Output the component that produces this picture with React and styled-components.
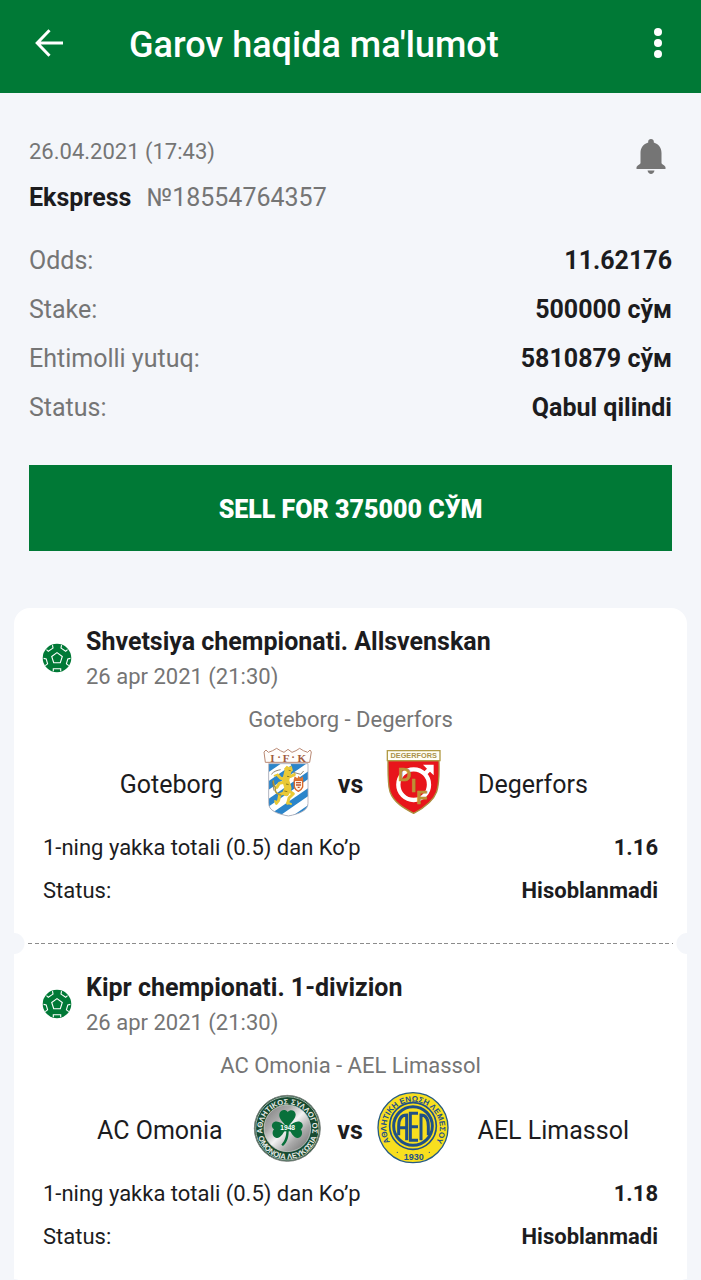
import React from "react";
import styled, { createGlobalStyle, ThemeProvider } from "styled-components";

const theme = {
    colors: {
        primary: "#007936",
        page: "#f4f6fa",
        surface: "#ffffff",
        text: "#1c1c1e",
        muted: "#757575",
    },
};

const GlobalStyle = createGlobalStyle`
    * {
        box-sizing: border-box;
    }

    body {
        margin: 0;
        font-family: Roboto, "Liberation Sans", sans-serif;
        color: ${({ theme }) => theme.colors.text};
        background: ${({ theme }) => theme.colors.page};
    }
`;

const Page = styled.div`
    display: flex;
    flex-direction: column;
    height: 100vh;
`;

const TopBar = styled.header`
    display: flex;
    flex-shrink: 0;
    align-items: center;
    height: 93px;
    padding: 0 28px 8px 29px;
    color: white;
    background: ${({ theme }) => theme.colors.primary};
`;

const TopBarTitle = styled.h1`
    flex: 1;
    margin: 0;
    padding: 5px 0 0 60px;
    font-size: 36px;
    line-height: 44px;
    font-weight: 500;
`;

const IconButton = styled.button`
    display: flex;
    align-items: center;
    justify-content: center;
    width: ${({ $size }) => $size}px;
    height: ${({ $size }) => $size}px;
    padding: 0;
    border: 0;
    color: inherit;
    background: none;
    cursor: pointer;
`;

const Content = styled.main`
    flex: 1;
    min-height: 0;
    overflow-y: auto;
    scrollbar-width: none;
`;

const Summary = styled.section`
    padding: 43px 29px 57px;
`;

const SummaryHead = styled.div`
    display: flex;
    justify-content: space-between;
    align-items: flex-start;
    color: ${({ theme }) => theme.colors.muted};
`;

const BetDate = styled.div`
    font-size: 22px;
    line-height: 32px;
`;

const BetNumber = styled.div`
    display: flex;
    gap: 15px;
    margin: 10px 0 18px;
    font-size: 25px;
    line-height: 40px;

    strong {
        font-weight: 700;
        color: ${({ theme }) => theme.colors.text};
    }
`;

const List = styled.dl`
    margin: 0;
`;

const SummaryRow = styled.div`
    display: flex;
    justify-content: space-between;
    font-size: 25px;
    line-height: 49px;

    dt {
        color: ${({ theme }) => theme.colors.muted};
    }

    dd {
        margin: 0;
        font-weight: 700;
    }
`;

const SellButton = styled.button`
    display: block;
    width: 100%;
    height: 86px;
    margin-top: 33px;
    padding: 2px 0 0;
    border: 0;
    font-family: inherit;
    font-size: 25px;
    font-weight: 900;
    color: white;
    background: ${({ theme }) => theme.colors.primary};
    cursor: pointer;
`;

const Coupon = styled.section`
    margin: 0 14px;
    border-radius: 16px 16px 0 0;
    overflow: hidden;
`;

const Event = styled.article`
    padding: 17px 29px 21px;
    background: ${({ theme }) => theme.colors.surface};
`;

const EventHead = styled.div`
    display: flex;
    align-items: flex-start;
    gap: 15px;
`;

const SportIcon = styled.span`
    display: flex;
    padding-top: 19px;
`;

const EventTitle = styled.h2`
    margin: 0;
    font-size: 25px;
    line-height: 34px;
    font-weight: 700;
`;

const EventDate = styled.div`
    font-size: 22px;
    line-height: 36px;
    color: ${({ theme }) => theme.colors.muted};
`;

const MatchName = styled.div`
    margin: 10px 0 13px;
    font-size: 22px;
    line-height: 30px;
    text-align: center;
    color: ${({ theme }) => theme.colors.muted};
`;

const Teams = styled.div`
    display: grid;
    grid-template-columns: 1fr 72px 53px 72px 1fr;
    align-items: center;
    margin-bottom: 6px;
`;

const TeamName = styled.span`
    padding: 0 29px;
    font-size: 25px;
    text-align: ${({ $side }) => ($side === "home" ? "right" : "left")};
    white-space: nowrap;
`;

const Versus = styled.span`
    font-size: 25px;
    font-weight: 700;
    text-align: center;
`;

const BetRow = styled.div`
    display: flex;
    justify-content: space-between;
    font-size: 22px;
    line-height: 43px;

    dd {
        margin: 0;
        font-weight: 700;
    }
`;

// Tear line between coupon events with a round notch on each side
const TearLine = styled.div`
    display: flex;
    align-items: center;
    height: 21px;
    padding: 0 14px;
    background:
        radial-gradient(circle at 0 50%, ${({ theme }) => theme.colors.page} 10px, transparent 11px),
        radial-gradient(circle at 100% 50%, ${({ theme }) => theme.colors.page} 10px, transparent 11px),
        ${({ theme }) => theme.colors.surface};

    &::after {
        content: "";
        flex: 1;
        height: 1px;
        background: repeating-linear-gradient(
            to right,
            #8c8c8c 0 4px,
            transparent 4px 7px,
            #8c8c8c 7px 11px,
            transparent 11px 13px
        );
    }
`;

const Crest = styled.svg`
    display: block;
    width: 72px;
    height: 72px;
    overflow: visible;
`;

const BackIcon = () => (
    <svg width="28" height="28" viewBox="0 0 28 28" fill="none" stroke="currentColor" strokeWidth="3">
        <path d="M14.500 1.200 2.200 14l12.300 12.800M2.500 14H28" />
    </svg>
);

const MoreIcon = () => (
    <svg width="10" height="32" viewBox="0 0 10 32" fill="currentColor">
        <circle cx="5" cy="5" r="4" />
        <circle cx="5" cy="16" r="4" />
        <circle cx="5" cy="27" r="4" />
    </svg>
);

const BellIcon = () => (
    <svg width="30" height="36" viewBox="0 0 30 36" fill="currentColor">
        <path d="M15 0c1.700 0 2.800 1.100 2.800 2.600v1C22.500 5 25.500 9 25.500 14v10c0 1.500 4 2.500 4 4.500v1.500H.5v-1.500c0-2 4-3 4-4.500V14c0-5 3-9 7.700-10.400v-1C12.200 1.100 13.300 0 15 0Z" />
        <path d="M11.500 31.500h7c-.5 2-1.800 3.500-3.500 3.500s-3-1.500-3.500-3.500Z" />
    </svg>
);

const BallIcon = () => (
    <svg width="28" height="28" viewBox="0 0 28 28" fill="none" stroke="white" strokeWidth="1.100" overflow="visible">
        <circle cx="14" cy="14" r="14.300" fill="#007936" stroke="none" />
        <path d="m14 8.600 5.300 3.900-2 6.200h-6.600l-2-6.200Z" />
        <path d="M3.500 5.700 5.300 7.300 10 4.100 9.500 1.200M24.500 5.700l-1.800 1.600L18 4.100l.5-2.900M.6 14.400l2.600.5 1.400 5-2.400 1.700M27.400 14.400l-2.600.5-1.400 5 2.400 1.700M10.300 27.200v-2.500h7.400v2.500" />
    </svg>
);

const GoteborgCrest = () => (
    <Crest viewBox="6 39 216 216" role="img" aria-label="IFK Goteborg">
        <defs>
            <clipPath id="ifk-shield">
                <path d="M56 86H174V205C174 226 151 236 115 243 79 236 56 226 56 205Z" />
            </clipPath>
        </defs>
        <path
            d="M46 82 42 51 48 45 55 52 68 47 80 40 91 47 102 52 114 43 126 52 138 47 149 40 160 47 173 52 180 45 184 51 179 82Z"
            fill="#fffdfb"
            stroke="#b98974"
            strokeWidth="3"
        />
        <g
            textAnchor="middle"
            fontFamily="Liberation Serif, serif"
            fontSize="33"
            fontWeight="700"
            fill="#a05a3e"
        >
            <text x="67" y="80">I</text>
            <text x="87" y="78">·</text>
            <text x="108" y="80">F</text>
            <text x="129" y="78">·</text>
            <text x="155" y="80">K</text>
        </g>
        <g clipPath="url(#ifk-shield)">
            <path d="M50 80h130v170H50Z" fill="#2b85ca" />
            <path
                d="M50 129 118 82M50 182 180 92M50 232 180 142M80 262 180 193"
                stroke="#fff"
                strokeWidth="22"
            />
        </g>
        <path
            d="M56 86H174V205C174 226 151 236 115 243 79 236 56 226 56 205Z"
            fill="none"
            stroke="#a9a9b4"
            strokeWidth="2.500"
        />
        <g fill="none" stroke="#e9c936" strokeLinecap="round" strokeLinejoin="round">
            <path d="M114 108 107 136 114 160 108 173" strokeWidth="21" />
            <path d="m109 133-17-3-9-10M110 140l-22 5-7 12M117 168l13 8-13 13-4 16M104 173l-15 6-3 17-7 9M122 124l11-5" strokeWidth="9" />
            <path d="M92 180c-12-3-18-11-16-19 2-7-9-12-6-23" strokeWidth="5" stroke="#b39b35" />
            <path d="m112 203 11 4M79 204l-4-6M83 119l-9 3" strokeWidth="6" />
        </g>
        <path d="m102 101 8-9 7 4 8-3 4 14-13 8-10-4Z" fill="#e9c936" />
        <path d="m116 106 6 1M111 124l7 1M108 147l8 2M103 168l9 2" stroke="#8a7a20" strokeWidth="3" />
        <path d="M64 118c8-10 18-12 28-14M67 139l5 28M130 112l22 6 9-10" fill="none" stroke="#78705a" strokeWidth="2.500" />
        <path d="M133 136h25v20c-3 8-9 11-13 13-5-2-10-6-12-13Z" fill="#fff3e2" stroke="#d9692c" strokeWidth="4" />
        <path d="m131 135 3-11 8 6 4-8 5 8 7-6 2 11Z" fill="#de7431" />
        <path d="M138 143h15M138 150h15M143 157h6" stroke="#c3542d" strokeWidth="4" />
    </Crest>
);

const DegerforsCrest = () => (
    <Crest viewBox="381 39 216 216" role="img" aria-label="Degerfors IF">
        <path
            d="M414 77H567C568 119 567 150 560 170 549 201 519 220 491 235 462 220 431 202 420 170 413 148 414 119 414 77Z"
            fill="#e8151b"
            stroke="#ac9140"
            strokeWidth="4"
        />
        <path d="M412 47H570V77H412Z" fill="#fffef5" stroke="#b19a45" strokeWidth="4" />
        <text
            x="491"
            y="70"
            textAnchor="middle"
            fontFamily="Liberation Sans, sans-serif"
            fontSize="22"
            fontWeight="700"
            fill="#a9924b"
        >
            DEGERFORS
        </text>
        <circle cx="491" cy="149" r="46" fill="none" stroke="#fff" strokeWidth="13" />
        <path d="m521 111 10-10-12-12h32v32l-11-11-11 11Z" fill="#fff" />
        <g
            fontFamily="Liberation Sans, sans-serif"
            fontSize="54"
            fontWeight="700"
            fill="#bd9137"
            stroke="#bd9137"
            strokeWidth="2"
            textAnchor="middle"
        >
            <text x="464" y="138">D</text>
            <text x="491" y="172">I</text>
            <text x="516" y="206">F</text>
        </g>
    </Crest>
);

const OmoniaCrest = () => (
    <Crest viewBox="36 42 216 216" role="img" aria-label="AC Omonia">
        <defs>
            <linearGradient id="omonia-metal" x1="0" y1="0" x2="1" y2="1">
                <stop offset="0" stopColor="#777" />
                <stop offset=".3" stopColor="#aaa" />
                <stop offset=".5" stopColor="#f2f2f2" />
                <stop offset=".7" stopColor="#aaa" />
                <stop offset="1" stopColor="#666" />
            </linearGradient>
            <path id="omonia-top" d="M68 160A75 75 0 1 1 216 160" />
            <path id="omonia-bottom" d="M52 160A91 91 0 0 0 232 160" />
        </defs>
        <circle cx="142" cy="145" r="99" fill="#174a30" stroke="#7c827e" strokeWidth="3" />
        <circle cx="142" cy="145" r="95" fill="none" stroke="#e2e5e1" strokeWidth="2" />
        <circle cx="142" cy="145" r="70" fill="url(#omonia-metal)" stroke="#d6dad6" strokeWidth="2" />
        <g
            fontFamily="Liberation Sans, sans-serif"
            fontSize="23"
            fontWeight="700"
            fill="#e7ebe7"
            textAnchor="middle"
        >
            <text>
                <textPath href="#omonia-top" startOffset="50%">ΑΘΛΗΤΙΚΟΣ ΣΥΛΛΟΓΟΣ</textPath>
            </text>
            <text>
                <textPath href="#omonia-bottom" startOffset="50%">ΟΜΟΝΟΙΑ ΛΕΥΚΩΣΙΑ</textPath>
            </text>
        </g>
        <g fill="#08703b">
            <path d="M142 142c-11-13-27-27-24-40 3-13 18-16 25-6 8-10 23-6 24 7 1 13-15 26-25 39Z" />
            <path d="M139 142c-14-18-34-23-41-12-5 8-1 14 4 18-8 9-4 24 8 26 13 1 22-17 29-32Z" />
            <path d="M145 142c14-18 34-23 41-12 5 8 1 14-4 18 8 9 4 24-8 26-13 1-22-17-29-32Z" />
            <path d="M139 146h7c1 24-3 39-17 52l-5-4c11-13 16-27 15-48Z" />
            <path d="M120 134h44v20h-44Z" />
        </g>
        <text
            x="143"
            y="151"
            textAnchor="middle"
            fontFamily="Liberation Sans, sans-serif"
            fontSize="20"
            fontWeight="700"
            fill="white"
        >
            1948
        </text>
    </Crest>
);

const LimassolCrest = () => (
    <Crest viewBox="411 42 216 216" role="img" aria-label="AEL Limassol">
        <defs>
            <path id="ael-ring" d="M464 203A80 80 0 1 1 574 203" />
        </defs>
        <circle cx="519" cy="143" r="105" fill="#f8df1f" stroke="#265b82" strokeWidth="4" />
        <circle cx="519" cy="138" r="70" fill="none" stroke="#1f5087" strokeWidth="5" />
        <circle cx="519" cy="138" r="58" fill="#f8df1f" stroke="#1f5087" strokeWidth="9" />
        <g
            fontFamily="Liberation Sans, sans-serif"
            fontWeight="700"
            fill="#1f5087"
            textAnchor="middle"
        >
            <text fontSize="24">
                <textPath href="#ael-ring" startOffset="50%">ΑΘΛΗΤΙΚΗ ΕΝΩΣΗ ΛΕΜΕΣΟΥ</textPath>
            </text>
            <text x="521" y="240" fontSize="27">1930</text>
        </g>
        <g fill="none" stroke="#1f5087" strokeWidth="9">
            <path d="M476 166V139q0-34 24-34V181M476 143h24" />
            <path d="M534 100H511V181H534M511 140h23" />
            <path d="M543 181V105q22 0 22 34V166" />
        </g>
        <circle cx="472" cy="217" r="2" fill="#1f5087" />
        <circle cx="568" cy="217" r="2" fill="#1f5087" />
    </Crest>
);

const summary = [
    { label: "Odds:", value: "11.62176" },
    { label: "Stake:", value: "500000 сўм" },
    { label: "Ehtimolli yutuq:", value: "5810879 сўм" },
    { label: "Status:", value: "Qabul qilindi" },
];

const events = [
    {
        title: "Shvetsiya chempionati. Allsvenskan",
        date: "26 apr 2021 (21:30)",
        home: "Goteborg",
        away: "Degerfors",
        HomeCrest: GoteborgCrest,
        AwayCrest: DegerforsCrest,
        bet: "1-ning yakka totali (0.5) dan Ko’p",
        odds: "1.16",
        status: "Hisoblanmadi",
    },
    {
        title: "Kipr chempionati. 1-divizion",
        date: "26 apr 2021 (21:30)",
        home: "AC Omonia",
        away: "AEL Limassol",
        HomeCrest: OmoniaCrest,
        AwayCrest: LimassolCrest,
        bet: "1-ning yakka totali (0.5) dan Ko’p",
        odds: "1.18",
        status: "Hisoblanmadi",
    },
];

const CouponEvent = ({ event }) => {
    const { HomeCrest, AwayCrest } = event;

    return (
        <Event>
            <EventHead>
                <SportIcon>
                    <BallIcon />
                </SportIcon>
                <div>
                    <EventTitle>{event.title}</EventTitle>
                    <EventDate>{event.date}</EventDate>
                </div>
            </EventHead>
            <MatchName>
                {event.home} - {event.away}
            </MatchName>
            <Teams>
                <TeamName $side="home">{event.home}</TeamName>
                <HomeCrest />
                <Versus>vs</Versus>
                <AwayCrest />
                <TeamName $side="away">{event.away}</TeamName>
            </Teams>
            <List>
                <BetRow>
                    <dt>{event.bet}</dt>
                    <dd>{event.odds}</dd>
                </BetRow>
                <BetRow>
                    <dt>Status:</dt>
                    <dd>{event.status}</dd>
                </BetRow>
            </List>
        </Event>
    );
};

const App = () => {
    return (
        <ThemeProvider theme={theme}>
            <GlobalStyle />
            <Page>
                <TopBar>
                    <IconButton $size={40} aria-label="Back">
                        <BackIcon />
                    </IconButton>
                    <TopBarTitle>Garov haqida ma'lumot</TopBarTitle>
                    <IconButton $size={30} aria-label="More">
                        <MoreIcon />
                    </IconButton>
                </TopBar>
                <Content>
                    <Summary>
                        <SummaryHead>
                            <div>
                                <BetDate>26.04.2021 (17:43)</BetDate>
                                <BetNumber>
                                    <strong>Ekspress</strong>
                                    <span>№18554764357</span>
                                </BetNumber>
                            </div>
                            <IconButton $size={42} aria-label="Notifications">
                                <BellIcon />
                            </IconButton>
                        </SummaryHead>
                        <List>
                            {summary.map(({ label, value }) => (
                                <SummaryRow key={label}>
                                    <dt>{label}</dt>
                                    <dd>{value}</dd>
                                </SummaryRow>
                            ))}
                        </List>
                        <SellButton>SELL FOR 375000 СЎМ</SellButton>
                    </Summary>
                    <Coupon>
                        {events.map((event) => (
                            <React.Fragment key={event.title}>
                                <CouponEvent event={event} />
                                <TearLine />
                            </React.Fragment>
                        ))}
                    </Coupon>
                </Content>
            </Page>
        </ThemeProvider>
    );
};

export default App;
